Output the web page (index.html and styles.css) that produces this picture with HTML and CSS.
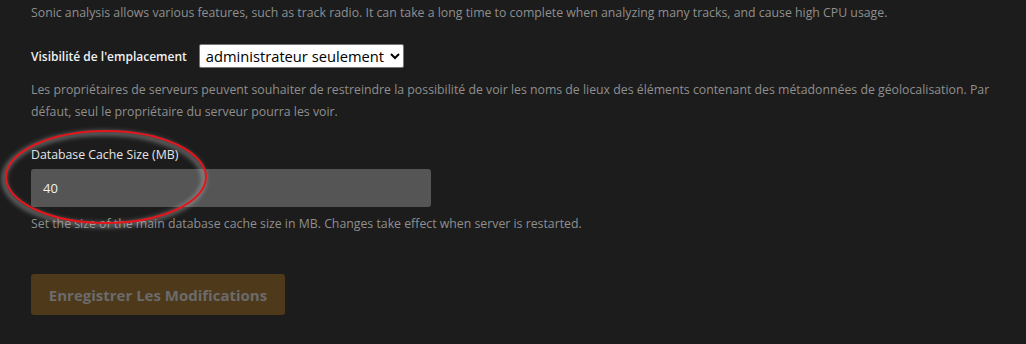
FILE: index.html
```html
<!DOCTYPE html>
<html lang="fr">
<head>
    <meta charset="UTF-8">
    <title>Paramètres</title>
    <link rel="stylesheet" href="styles.css">
</head>
<body>
    <div class="settings">
        <div class="field-desc first">Sonic analysis allows various features, such as track radio. It can take a long time to complete when analyzing many tracks, and cause high CPU usage.</div>

        <div class="inline-field">
            <label for="locVis">Visibilité de l'emplacement</label>
            <select id="locVis">
                <option>administrateur seulement</option>
            </select>
        </div>
        <div class="field-desc loc-desc">Les propriétaires de serveurs peuvent souhaiter de restreindre la possibilité de voir les noms de lieux des éléments contenant des métadonnées de géolocalisation. Par défaut, seul le propriétaire du serveur pourra les voir.</div>

        <div class="block-field">
            <label for="cacheSize">Database Cache Size (MB)</label>
            <input type="text" id="cacheSize" value="40">
            <div class="field-desc">Set the size of the main database cache size in MB. Changes take effect when server is restarted.</div>
        </div>

        <button class="save-btn" disabled>Enregistrer Les Modifications</button>

        <!-- annotation drawn over the screenshot -->
        <svg class="annotation" width="240" height="130" viewBox="0 0 240 130">
            <defs>
                <filter id="glow" x="-20%" y="-20%" width="140%" height="140%">
                    <feGaussianBlur stdDeviation="2.5"/>
                </filter>
            </defs>
            <ellipse cx="106" cy="64" rx="100" ry="46" fill="none" stroke="#bbb" stroke-width="4" opacity="0.6" filter="url(#glow)" transform="translate(-2 2)"/>
            <ellipse cx="106" cy="64" rx="100" ry="46" fill="none" stroke="#e4161b" stroke-width="2"/>
        </svg>
    </div>
</body>
</html>
```

FILE: styles.css
```css
body {
    margin: 0;
    background-color: #1c1c1c;
    font-family: "Open Sans", "Noto Sans", sans-serif;
    font-size: 12.3px;
    color: #e6e6e6;
}
.settings {
    position: relative;
    padding: 2px 31px 0 31px;
    height: 342px;
}
.field-desc {
    color: #8f8f8f;
    line-height: 22px;
    margin-top: 8px;
    max-width: 968px;
}
.field-desc.first {
    margin-top: 0;
}
.field-desc.loc-desc {
    margin-top: 10px;
}
.inline-field {
    display: flex;
    align-items: center;
    margin-top: 19px;
    height: 26px;
}
.inline-field label {
    font-weight: 600;
    font-size: 12px;
    color: #f0f0f0;
    margin-right: 12px;
}
.inline-field select {
    font-family: "Open Sans", "Noto Sans", sans-serif;
    font-size: 14.7px;
    height: 24px;
    padding: 0 2px;
    background-color: #fff;
    color: #000;
    border: 1px solid #767676;
    border-radius: 2px;
}
.block-field {
    margin-top: 23px;
}
.block-field label {
    display: block;
    color: #e6e6e6;
    margin-bottom: 5px;
    line-height: 18px;
}
.block-field input {
    box-sizing: border-box;
    width: 400px;
    height: 38px;
    padding: 0 12px;
    border: none;
    border-radius: 3px;
    background-color: #555555;
    color: #f0f0f0;
    font-family: "Open Sans", "Noto Sans", sans-serif;
    font-size: 13px;
}
.block-field .field-desc {
    margin-top: 6px;
}
.save-btn {
    margin-top: 39px;
    width: 254px;
    height: 41px;
    border: none;
    border-radius: 3px;
    background-color: #4e391b;
    color: #6b6b6b;
    font-family: "Open Sans", "Noto Sans", sans-serif;
    font-size: 15px;
    font-weight: 700;
}
.annotation {
    position: absolute;
    left: 0;
    top: 113px;
    pointer-events: none;
}
```
